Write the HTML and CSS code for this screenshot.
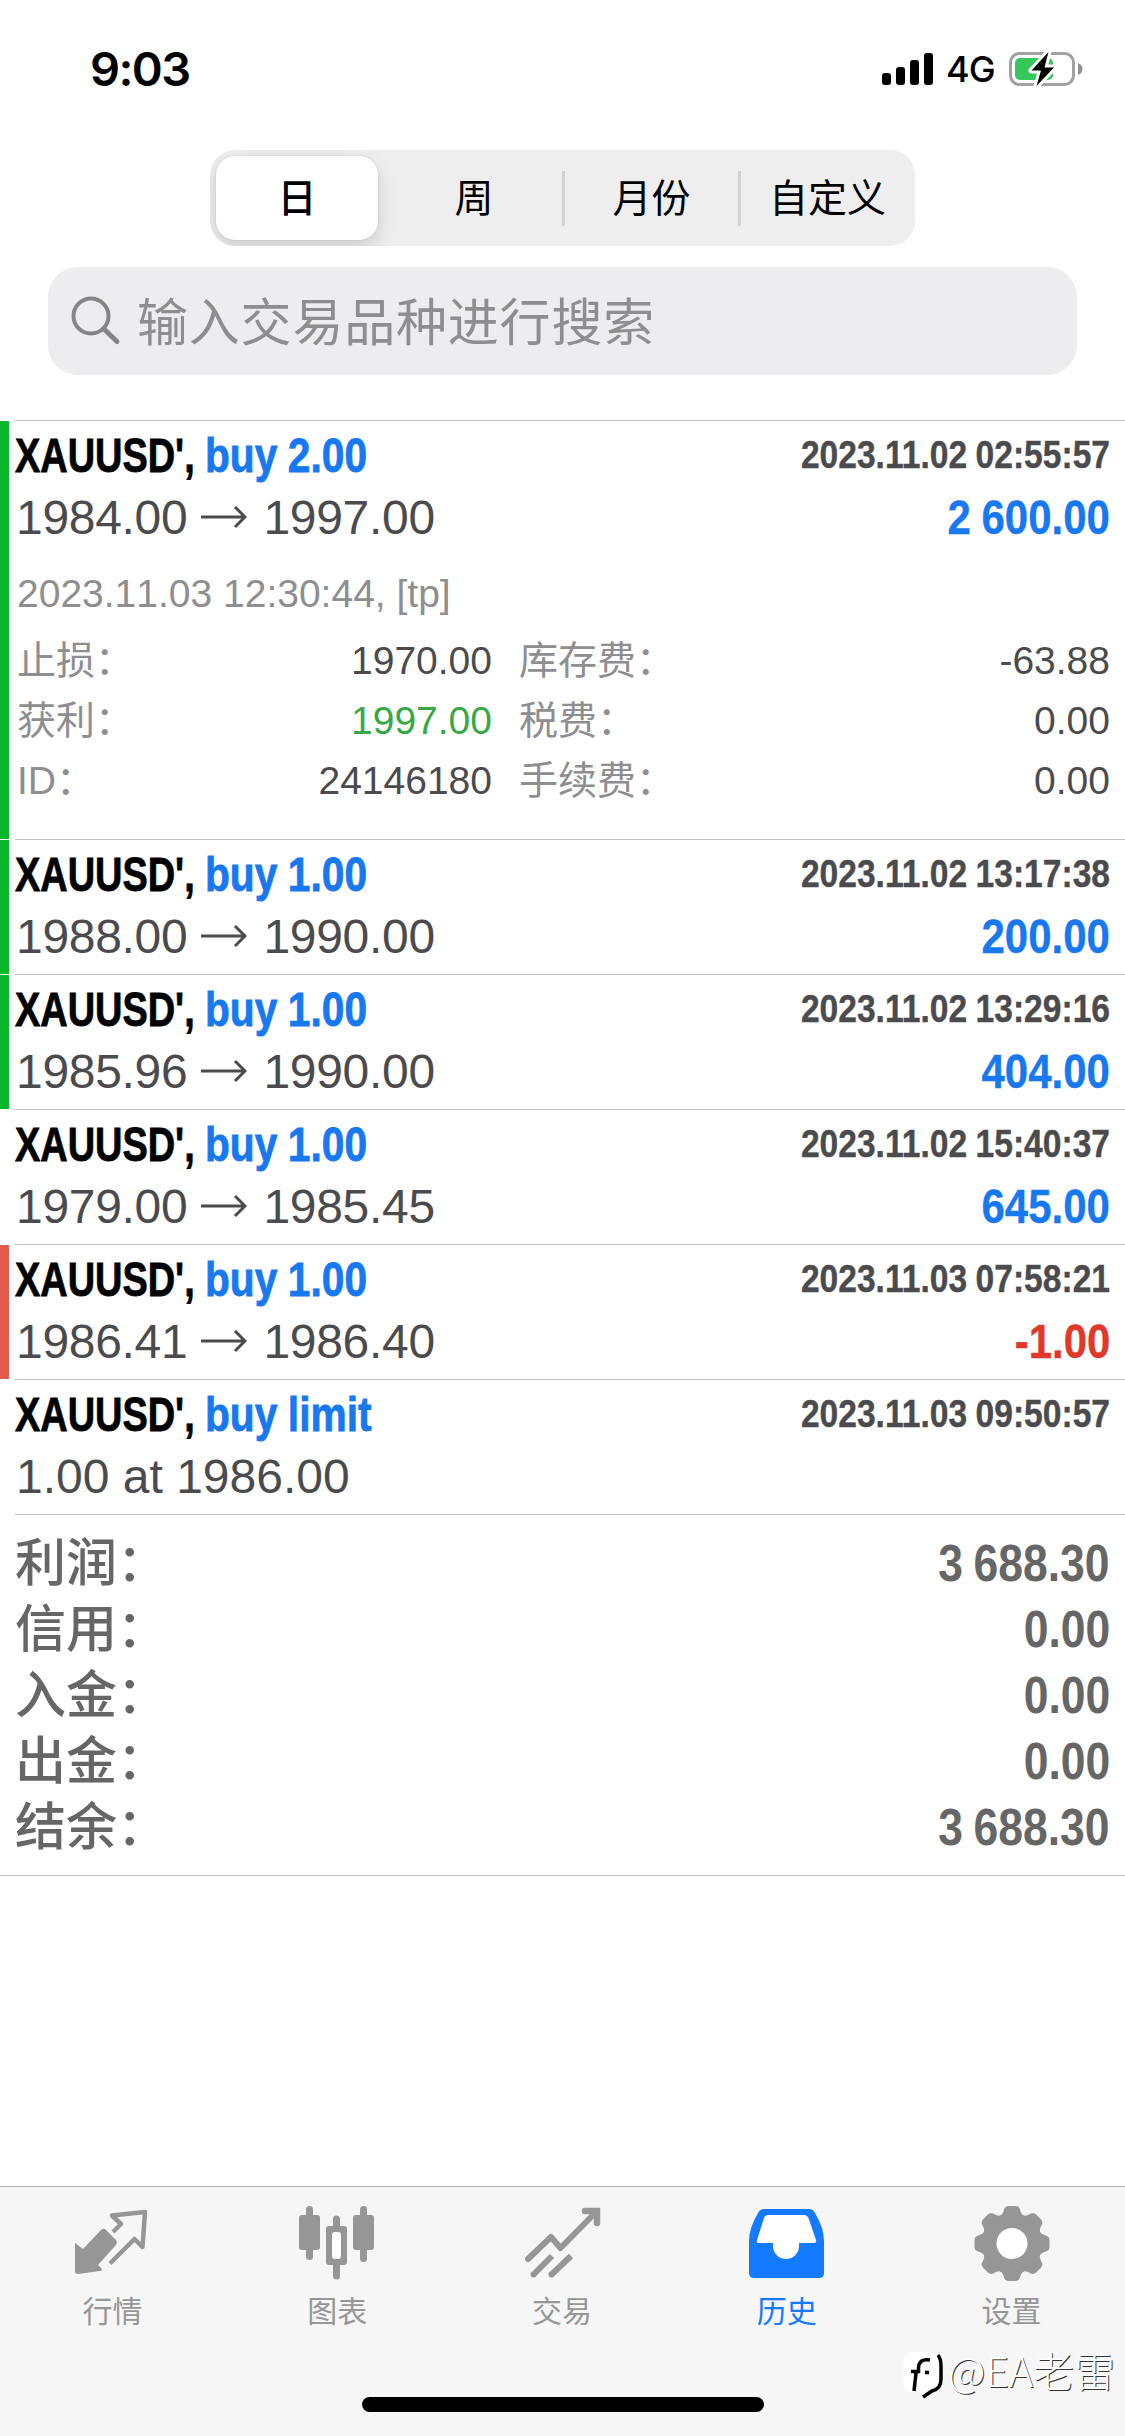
FILE: index.html
```html
<!DOCTYPE html>
<html lang="zh-CN">
<head>
<meta charset="utf-8">
<title>历史</title>
<link rel="stylesheet" href="styles.css">
</head>
<body>
<div class="screen">
  <header class="status">
    <div class="clock">9:03</div>
    <div class="indicators">
      <svg class="signal" width="52" height="34" viewBox="0 0 52 34"><rect x="0" y="21" width="9" height="12" rx="3"/><rect x="14" y="15" width="9" height="18" rx="3"/><rect x="28" y="8" width="9" height="25" rx="3"/><rect x="42" y="1" width="9" height="32" rx="3"/></svg>
      <span class="network">4G</span>
      <svg class="battery" width="75" height="38" viewBox="1008 50 75 38">
        <rect x="1010.5" y="53.500" width="63" height="31" rx="9" fill="none" stroke="#a3a0a3" stroke-width="3"/>
        <path d="M1078 63q4.500 2 4.500 6t-4.500 6z" fill="#8f8f8f"/>
        <rect x="1015" y="58" width="38" height="22" rx="5" fill="#34c759"/>
        <path d="M1048.500 52L1031.500 70.500H1041L1036.500 86L1054 67.500H1044.500Z" fill="#000" stroke="#fff" stroke-width="6" paint-order="stroke" stroke-linejoin="round"/>
      </svg>
    </div>
  </header>

  <nav class="segments">
    <div class="segment selected">日</div>
    <div class="segment">周</div>
    <div class="segment divided">月份</div>
    <div class="segment divided">自定义</div>
  </nav>

  <div class="search">
    <svg width="50" height="50" viewBox="0 0 50 50" fill="none" stroke="#858589" stroke-width="4" stroke-linecap="round"><circle cx="20" cy="20" r="17.500"/><path d="M33 33L46 45.500" stroke-width="5"/></svg>
    <span>输入交易品种进行搜索</span>
  </div>

  <main class="deals">
    <section class="deal profit expanded">
      <div class="body">
        <div class="head"><div class="title"><span class="symbol">XAUUSD',</span><span class="side">buy 2.00</span></div><time class="time">2023.11.02 02:55:57</time></div>
        <div class="prices"><div class="route">1984.00<svg class="arrow" viewBox="0 0 46 24"><path d="M0 12H44M34 2L44 12L34 22"/></svg>1997.00</div><div class="amount">2 600.00</div></div>
        <div class="closed">2023.11.03 12:30:44, [tp]</div>
        <dl class="details">
          <dt>止损：</dt><dd>1970.00</dd><dt>库存费：</dt><dd>-63.88</dd>
          <dt>获利：</dt><dd class="hit">1997.00</dd><dt>税费：</dt><dd>0.00</dd>
          <dt>ID：</dt><dd>24146180</dd><dt>手续费：</dt><dd>0.00</dd>
        </dl>
      </div>
    </section>
    <section class="deal profit">
      <div class="body">
        <div class="head"><div class="title"><span class="symbol">XAUUSD',</span><span class="side">buy 1.00</span></div><time class="time">2023.11.02 13:17:38</time></div>
        <div class="prices"><div class="route">1988.00<svg class="arrow" viewBox="0 0 46 24"><path d="M0 12H44M34 2L44 12L34 22"/></svg>1990.00</div><div class="amount">200.00</div></div>
      </div>
    </section>
    <section class="deal profit">
      <div class="body">
        <div class="head"><div class="title"><span class="symbol">XAUUSD',</span><span class="side">buy 1.00</span></div><time class="time">2023.11.02 13:29:16</time></div>
        <div class="prices"><div class="route">1985.96<svg class="arrow" viewBox="0 0 46 24"><path d="M0 12H44M34 2L44 12L34 22"/></svg>1990.00</div><div class="amount">404.00</div></div>
      </div>
    </section>
    <section class="deal">
      <div class="body">
        <div class="head"><div class="title"><span class="symbol">XAUUSD',</span><span class="side">buy 1.00</span></div><time class="time">2023.11.02 15:40:37</time></div>
        <div class="prices"><div class="route">1979.00<svg class="arrow" viewBox="0 0 46 24"><path d="M0 12H44M34 2L44 12L34 22"/></svg>1985.45</div><div class="amount">645.00</div></div>
      </div>
    </section>
    <section class="deal loss">
      <div class="body">
        <div class="head"><div class="title"><span class="symbol">XAUUSD',</span><span class="side">buy 1.00</span></div><time class="time">2023.11.03 07:58:21</time></div>
        <div class="prices"><div class="route">1986.41<svg class="arrow" viewBox="0 0 46 24"><path d="M0 12H44M34 2L44 12L34 22"/></svg>1986.40</div><div class="amount">-1.00</div></div>
      </div>
    </section>
    <section class="deal">
      <div class="body">
        <div class="head"><div class="title"><span class="symbol">XAUUSD',</span><span class="side">buy limit</span></div><time class="time">2023.11.03 09:50:57</time></div>
        <div class="prices"><div class="route pending">1.00 at 1986.00</div></div>
      </div>
    </section>
    <section class="summary">
      <div class="total"><span>利润：</span><b>3 688.30</b></div>
      <div class="total"><span>信用：</span><b>0.00</b></div>
      <div class="total"><span>入金：</span><b>0.00</b></div>
      <div class="total"><span>出金：</span><b>0.00</b></div>
      <div class="total"><span>结余：</span><b>3 688.30</b></div>
    </section>
  </main>

  <footer class="tabbar">
    <nav class="tabs">
      <div class="tab">
        <svg viewBox="0 0 80 84"><path d="M3 37L11 43L28 25Q31 21 34 24L44 34Q46 37 43 40L26 59L30 63Q30 65 28 65L6 68Q3 68 3 65Z"/><path d="M41 26L49 18L40 9.500L73 6L70.500 41L62.500 33L38 57.500" fill="none" stroke="#969696" stroke-width="4.500" stroke-linejoin="round"/></svg>
        <span>行情</span>
      </div>
      <div class="tab">
        <svg viewBox="0 0 80 84"><rect x="9" y="0" width="7" height="54" rx="3.500"/><rect x="2" y="9" width="21" height="35" rx="3"/><rect x="63" y="0" width="7" height="56" rx="3.500"/><rect x="56" y="9" width="21" height="35" rx="3"/><path d="M36 20V13a3.500 3.500 0 0 1 7 0V20H47a3 3 0 0 1 3 3V56a3 3 0 0 1-3 3H43V70a3.500 3.500 0 0 1-7 0V59H32a3 3 0 0 1-3-3V23a3 3 0 0 1 3-3Z"/><rect x="35" y="26" width="9" height="27" rx="3" fill="#fff"/></svg>
        <span>图表</span>
      </div>
      <div class="tab">
        <svg viewBox="0 0 80 84" fill="none" stroke="#969696" stroke-width="6"><path d="M6 53L29 31L38.500 42L74 6" stroke-linecap="round" stroke-linejoin="round"/><path d="M63 5H75V17" stroke-width="6.500" stroke-linecap="round"/><path d="M11 69L30 50M29 69L49 50"/><circle cx="11.500" cy="68.500" r="3" stroke="none" fill="#969696"/><circle cx="29.500" cy="68.500" r="3" stroke="none" fill="#969696"/></svg>
        <span>交易</span>
      </div>
      <div class="tab active">
        <svg viewBox="0 0 80 84"><path d="M17 3H62Q66 3 68 7Q77 22 77 35V67Q77 72 72 72H7Q2 72 2 67V35Q2 22 11 7Q13 3 17 3Z"/><path d="M21 9H57Q60 9 61.500 12L69 34Q70 37 67 37H52V40A13 13 0 0 1 26 40V37H12Q9 37 10 34L17 12Q18 9 21 9Z" fill="#fff"/></svg>
        <span>历史</span>
      </div>
      <div class="tab">
        <svg viewBox="0 0 80 84"><g transform="translate(40 37.500)"><circle r="30"/><g><path id="tooth" d="M-13 -27Q-9 -29 -8 -34Q-7 -37.500 -3 -37.500H3Q7 -37.500 8 -34Q9 -29 13 -27Z"/><use href="#tooth" transform="rotate(45)"/><use href="#tooth" transform="rotate(90)"/><use href="#tooth" transform="rotate(135)"/><use href="#tooth" transform="rotate(180)"/><use href="#tooth" transform="rotate(225)"/><use href="#tooth" transform="rotate(270)"/><use href="#tooth" transform="rotate(315)"/></g><circle r="15.500" fill="#fff"/></g></svg>
        <span>设置</span>
      </div>
    </nav>
    <div class="home-indicator"></div>
  </footer>

  <div class="watermark">
    <svg width="42" height="50" viewBox="0 0 42 50"><path d="M10 1H28Q39 2 39 15V28Q39 38 30 40L21 47V42L14 40L11 42Q1 39 1 29V12Q2 2 10 1Z" fill="#fff"/><path d="M28 9Q17 7 16.500 17V20.500H9M14 22L12 40M23 21.500H27" fill="none" stroke="#000" stroke-width="3.500"/><path d="M36 4Q39 8 39 15V28Q39 38 30 40L21 46" fill="none" stroke="#000" stroke-width="3.500"/></svg>
    <span>@EA老雷</span>
  </div>
</div>
</body>
</html>
```
FILE: styles.css
```css
* { box-sizing: border-box; }

body {
  margin: 0;
  background: #fff;
  font-family: "Liberation Sans", "Noto Sans CJK SC", sans-serif;
  color: #4b4b4e;
}

.screen {
  position: relative;
  display: flex;
  flex-direction: column;
  width: 1125px;
  height: 2436px;
  overflow: hidden;
}

.status {
  display: flex;
  justify-content: space-between;
  height: 150px;
  padding: 40px 42px 0 90px;
  color: #000;
  font-family: Inter, sans-serif;
}

.clock {
  font-size: 47px;
  font-weight: 600;
  letter-spacing: -1.6px;
  line-height: 58px;
}

.indicators {
  display: flex;
  align-items: center;
  height: 58px;
}

.network {
  width: 74px;
  padding-left: 12px;
  font-size: 36px;
  font-weight: 500;
  letter-spacing: -1px;
  line-height: 60px;
}

.segments {
  display: flex;
  flex: none;
  width: 705px;
  height: 96px;
  margin: 0 auto;
  padding: 6px 0 6px 6px;
  overflow: hidden;
  background: #eee;
  border-radius: 25px;
  color: #000;
  font-size: 39px;
}

.segment {
  display: flex;
  flex: none;
  align-items: center;
  justify-content: center;
  width: 176px;
  height: 84px;
  padding-bottom: 6px;
}

.segment.selected {
  width: 162px;
  margin-right: 8px;
  background: #fff;
  border-radius: 19px;
  box-shadow: 0 8px 20px rgba(0, 0, 0, .14), 0 0 3px rgba(0, 0, 0, .1);
  font-weight: 500;
}

.segment.divided {
  padding-left: 3px;
  background: linear-gradient(#d3d3d5, #d3d3d5) left center / 3px 55px no-repeat;
}

.search {
  display: flex;
  flex: none;
  align-items: center;
  gap: 16px;
  width: 1029px;
  height: 108px;
  margin: 21px 48px 0;
  padding-left: 23px;
  background: #ededf0;
  border-radius: 30px;
  color: #8e8e91;
  font-size: 51px;
  letter-spacing: .8px;
}

.search span { padding-bottom: 5px; }

.deals { margin-top: 45px; }

.deal {
  height: 135px;
  padding-left: 15px;
}

.deal.expanded { height: 419px; }

.deal.profit { background: linear-gradient(#0ab62c, #0ab62c) 0 1px / 9px 100% no-repeat; }

.deal.loss { background: linear-gradient(#e25c4e, #e25c4e) 0 1px / 9px 100% no-repeat; }

.body {
  height: 100%;
  padding-right: 15px;
  border-top: 1px solid #c0c0c2;
}

.head,
.prices {
  display: flex;
  justify-content: space-between;
  white-space: nowrap;
}

.head {
  height: 66px;
  font-weight: 700;
}

.title {
  display: flex;
  font-size: 48px;
  line-height: 69px;
}

.symbol,
.side {
  display: block;
  transform-origin: left center;
  -webkit-text-stroke: .8px currentColor;
}

.symbol {
  width: 190px;
  color: #000;
  transform: scaleX(.79);
}

.side {
  color: #1878f0;
  transform: scaleX(.848);
  word-spacing: -1px;
}

.time {
  font-size: 39px;
  line-height: 67px;
  transform: scaleX(.861);
  transform-origin: right center;
  word-spacing: -1px;
  -webkit-text-stroke: .4px currentColor;
}

.prices {
  height: 62px;
  font-size: 48px;
  line-height: 62px;
}

.route {
  padding-left: 1px;
  letter-spacing: -.3px;
}

.route.pending { letter-spacing: 0; }

.arrow {
  width: 46px;
  height: 24px;
  margin: 0 16px 5px 14px;
  fill: none;
  stroke: #4b4b4e;
  stroke-width: 3;
}

.amount {
  color: #1878f0;
  font-weight: 700;
  transform: scaleX(.874);
  transform-origin: right center;
  word-spacing: -1px;
  -webkit-text-stroke: .4px currentColor;
}

.loss .amount { color: #e0382a; }

.closed {
  height: 60px;
  margin-top: 15px;
  padding-left: 2px;
  color: #8e8e90;
  font-size: 39px;
  font-kerning: none;
  line-height: 60px;
}

.details {
  display: grid;
  grid-template-columns: 235px 240px 244px 1fr;
  grid-auto-rows: 60px;
  margin: 7px 0 0;
  padding-left: 2px;
  font-size: 39px;
  line-height: 60px;
}

.details dt { color: #8e8e90; }

.details dt:nth-of-type(even) { padding-left: 27px; }

.details dd {
  margin: 0;
  text-align: right;
}

.details .hit { color: #36a844; }

.summary {
  height: 362px;
  padding: 17px 15px 0;
  border-bottom: 1px solid #c0c0c2;
  background: linear-gradient(#c0c0c2, #c0c0c2) 15px 0 / 100% 1px no-repeat;
  color: #666;
}

.total {
  display: flex;
  justify-content: space-between;
  height: 66px;
  font-size: 51px;
  font-weight: 500;
  line-height: 66px;
}

.total b {
  transform: scaleX(.872);
  transform-origin: right center;
  word-spacing: -2px;
}

.tabbar {
  display: flex;
  flex-direction: column;
  align-items: center;
  height: 250px;
  margin-top: auto;
  background: #f6f6f6;
  border-top: 1px solid #b2b2b2;
}

.tabs {
  display: flex;
  width: 100%;
  padding: 19px 1px 0 0;
}

.tab {
  display: flex;
  flex: 1;
  flex-direction: column;
  align-items: center;
  color: #969696;
  fill: #969696;
  font-size: 30px;
  line-height: 43px;
}

.tab svg {
  width: 80px;
  height: 84px;
}

.tab.active {
  color: #147aff;
  fill: #147aff;
}

.home-indicator {
  width: 402px;
  height: 15px;
  margin: auto 0 24px;
  background: #000;
  border-radius: 8px;
}

/* Author mark laid over the tab bar */
.watermark {
  position: absolute;
  right: 10px;
  bottom: 35px;
  display: flex;
  align-items: flex-start;
  gap: 4px;
  color: #fff;
  font-family: "Noto Sans CJK SC", sans-serif;
  font-size: 41px;
  font-weight: 300;
  line-height: 36px;
  text-shadow: 1px 1px 0 #333;
}
```
